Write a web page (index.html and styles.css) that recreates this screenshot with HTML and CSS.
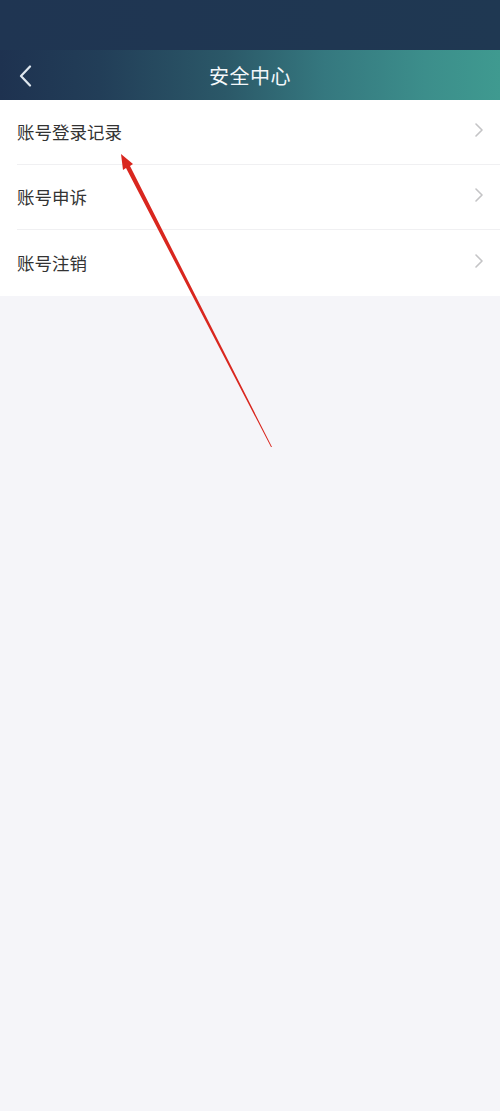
FILE: index.html
```html
<!DOCTYPE html>
<html lang="zh">
<head>
<meta charset="utf-8">
<link rel="stylesheet" href="styles.css">
</head>
<body>
<div class="page">
  <div class="statusbar"></div>
  <div class="navbar">
    <svg class="back" width="14" height="22" viewBox="0 0 14 22"><path d="M11 1.5 L2 11 L11 20.5" fill="none" stroke="#dfe7ee" stroke-width="2.2" stroke-linecap="round" stroke-linejoin="round"/></svg>
    <div class="title">安全中心</div>
  </div>
  <div class="list">
    <div class="row"><span class="label">账号登录记录</span><svg class="chev" width="8" height="14" viewBox="0 0 8 14"><path d="M1 1 L7 7 L1 13" fill="none" stroke="#c4c4c6" stroke-width="1.6" stroke-linecap="round" stroke-linejoin="round"/></svg></div>
    <div class="row"><span class="label">账号申诉</span><svg class="chev" width="8" height="14" viewBox="0 0 8 14"><path d="M1 1 L7 7 L1 13" fill="none" stroke="#c4c4c6" stroke-width="1.6" stroke-linecap="round" stroke-linejoin="round"/></svg></div>
    <div class="row"><span class="label">账号注销</span><svg class="chev" width="8" height="14" viewBox="0 0 8 14"><path d="M1 1 L7 7 L1 13" fill="none" stroke="#c4c4c6" stroke-width="1.6" stroke-linecap="round" stroke-linejoin="round"/></svg></div>
  </div>
  <svg class="arrow" width="500" height="1111" viewBox="0 0 500 1111">
    <polygon points="121,154 123,170 126,168 271,447 272,447 130,166 133,164" fill="#d9271f"/>
  </svg>
</div>
</body>
</html>
```
FILE: styles.css
```css
html, body {
  margin: 0;
  padding: 0;
}
body {
  width: 500px;
  height: 1111px;
  background: #f5f5f9;
  font-family: "Noto Sans CJK SC", "Noto Sans", sans-serif;
  overflow: hidden;
}
.page {
  position: relative;
  width: 500px;
  height: 1111px;
}
.statusbar {
  height: 50px;
  background: linear-gradient(90deg, #1f3552 0%, #1f3852 100%);
}
.navbar {
  height: 50px;
  display: flex;
  align-items: center;
  justify-content: center;
  position: relative;
  background: linear-gradient(90deg, #1e3250 0%, #223e58 20%, #2b5868 45%, #35787f 65%, #3c8e8b 85%, #3f9a90 100%);
}
.back {
  position: absolute;
  left: 19px;
  top: 15px;
}
.title {
  color: #f4f7fa;
  font-size: 20px;
  letter-spacing: 0.5px;
  line-height: 1;
  padding-top: 2px;
}
.list {
  background: #ffffff;
}
.row {
  box-sizing: border-box;
  height: 65px;
  display: flex;
  align-items: center;
  justify-content: space-between;
  margin-left: 17px;
  padding-right: 17px;
  padding-bottom: 2px;
  border-bottom: 1px solid #f0f0f2;
}
.row:last-child {
  border-bottom: none;
  height: 66px;
}
.label {
  font-size: 17.5px;
  color: #333333;
}
.chev {
  margin-top: -2px;
}
.arrow {
  position: absolute;
  left: 0;
  top: 0;
  pointer-events: none;
}
```
